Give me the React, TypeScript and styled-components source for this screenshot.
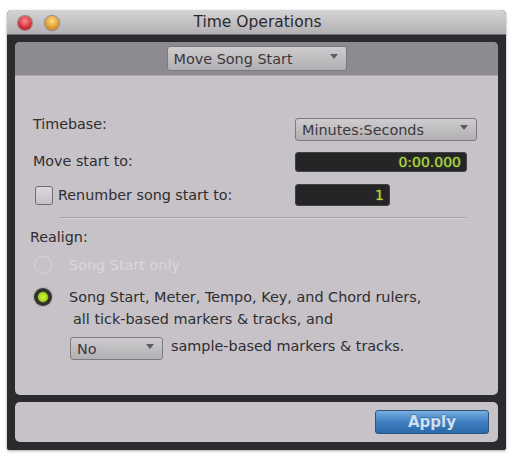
import React from "react";
import styled, { createGlobalStyle } from "styled-components";

const Global = createGlobalStyle`
  html, body { margin: 0; padding: 0; background: #ffffff; }
  body { font-family: "DejaVu Sans", "Liberation Sans", sans-serif; }
`;

const Page = styled.div`
  width: 510px;
  height: 454px;
  padding: 10px 0 0 7px;
  box-sizing: border-box;
`;

const Window = styled.div`
  width: 499px;
  height: 440px;
  background: #2b2a2e;
  border-radius: 5px 5px 2px 2px;
  display: flex;
  flex-direction: column;
  overflow: hidden;
  box-shadow: 0 1px 3px rgba(0,0,0,0.35);
`;

const TitleBar = styled.div`
  height: 25px;
  flex: none;
  position: relative;
  display: flex;
  align-items: center;
  justify-content: center;
  background: linear-gradient(#d6d3d7, #b3b0b4);
  border-bottom: 1px solid #6e6b70;
  box-sizing: border-box;
`;

const Lights = styled.div`
  position: absolute;
  left: 11px;
  top: 6px;
  display: flex;
  gap: 13px;
`;

const Light = styled.span<{ $c1: string; $c2: string }>`
  width: 14px;
  height: 14px;
  border-radius: 50%;
  background: radial-gradient(circle at 50% 35%, ${(p) => p.$c1} 0%, ${(p) => p.$c2} 70%);
  box-shadow: 0 0 0 1px rgba(90, 60, 40, 0.45);
`;

const Title = styled.div`
  font-size: 15.5px;
  color: #2a2a2a;
  margin-left: 2px;
`;

const Body = styled.div`
  flex: 1;
  display: flex;
  flex-direction: column;
  gap: 7px;
  padding: 7px 8px 8px 8px;
`;

const Panel = styled.div`
  height: 353px;
  border-radius: 5px;
  overflow: hidden;
  display: flex;
  flex-direction: column;
  background: #c6c2c7;
`;

const PanelHeader = styled.div`
  height: 34px;
  background: #8e8b90;
  display: flex;
  align-items: center;
  justify-content: center;
  border-bottom: 1px solid #a9a6ab;
  box-sizing: border-box;
`;

const Select = styled.div<{ $w: number; $h: number }>`
  width: ${(p) => p.$w}px;
  height: ${(p) => p.$h}px;
  box-sizing: border-box;
  border: 1px solid #7d7a7f;
  border-radius: 3px;
  background: linear-gradient(#cfccd0, #b2afb3);
  display: flex;
  align-items: center;
  justify-content: space-between;
  padding: 0 8px 0 6px;
  font-size: 14.4px;
  color: #3a383b;
  flex: none;
`;

const Arrow = styled.span`
  width: 0;
  height: 0;
  border-left: 4px solid transparent;
  border-right: 4px solid transparent;
  border-top: 5px solid #5f5c61;
  margin-top: -5px;
`;

const Content = styled.div`
  flex: 1;
  padding: 42px 30px 0 18px;
  display: flex;
  flex-direction: column;
`;

const FormRow = styled.div<{ $h: number; $mt: number }>`
  height: ${(p) => p.$h}px;
  margin-top: ${(p) => p.$mt}px;
  display: grid;
  grid-template-columns: 262px 1fr;
  align-items: center;
`;

const Label = styled.div<{ $dy?: number }>`
  font-size: 14.3px;
  color: #2f2d30;
  display: flex;
  align-items: center;
  gap: 5px;
  margin-top: ${(p) => p.$dy ?? 0}px;
`;

const Check = styled.span`
  width: 18px;
  height: 19px;
  box-sizing: border-box;
  border: 1px solid #6f6c71;
  border-radius: 3px;
  background: linear-gradient(#dcd9dd, #c4c1c5);
  margin-left: 2px;
`;

const Field = styled.div<{ $w: number; $h: number }>`
  width: ${(p) => p.$w}px;
  height: ${(p) => p.$h}px;
  box-sizing: border-box;
  background: #252426;
  border: 1px solid #414043;
  border-radius: 3px;
  color: #b2e043;
  font-size: 14px;
  display: flex;
  align-items: center;
  justify-content: flex-end;
  padding-right: 5px;
  text-shadow: 0 0 2px rgba(170, 230, 60, 0.5);
`;

const Separator = styled.div`
  height: 1px;
  margin: 11px 2px 0 27px;
  background: #a6a3a8;
  border-bottom: 1px solid #d3d0d4;
`;

const Section = styled.div`
  margin-top: 10px;
  margin-left: -3px;
  font-size: 14.3px;
  color: #2f2d30;
`;

const RadioRow = styled.div<{ $mt: number; $disabled?: boolean }>`
  margin-top: ${(p) => p.$mt}px;
  display: flex;
  align-items: center;
  gap: 17px;
  font-size: 14.4px;
  color: ${(p) => (p.$disabled ? "#dad7db" : "#2f2d30")};
  margin-left: 1px;
`;

const Radio = styled.span<{ $on?: boolean }>`
  width: 18px;
  height: 18px;
  border-radius: 50%;
  box-sizing: border-box;
  flex: none;
  ${(p) =>
    p.$on
      ? `background: radial-gradient(circle, #d2f53f 0%, #a4d61e 34%, #2c2e28 46%, #3d3d3b 100%);
         box-shadow: 0 0 2px rgba(0,0,0,0.4);`
      : `border: 1.5px solid #d9d6da; background: transparent;`}
`;

const TextLine = styled.div<{ $mt: number; $ml: number }>`
  margin-top: ${(p) => p.$mt}px;
  margin-left: ${(p) => p.$ml}px;
  font-size: 14.4px;
  color: #2f2d30;
  display: flex;
  align-items: center;
  gap: 8px;
`;

const SideText = styled.span`
  margin-top: -6px;
`;

const Footer = styled.div`
  height: 40px;
  border-radius: 5px;
  background: #c6c2c7;
  display: flex;
  align-items: center;
  justify-content: flex-end;
  padding-right: 9px;
`;

const ApplyButton = styled.button`
  width: 114px;
  height: 24px;
  border-radius: 3px;
  border: 1px solid #2d5378;
  background: linear-gradient(#78ade0 0%, #3d7ec0 50%, #2c69a9 100%);
  color: #cfe0f1;
  font-family: "DejaVu Sans", "Liberation Sans", sans-serif;
  font-size: 15px;
  font-weight: bold;
  padding: 0;
  text-shadow: 0 -1px 0 rgba(0,0,0,0.25);
`;

export default function App() {
  return (
    <>
      <Global />
      <Page>
        <Window>
          <TitleBar>
            <Lights>
              <Light $c1="#ff8a8f" $c2="#c8202c" />
              <Light $c1="#ffe08a" $c2="#d8901c" />
            </Lights>
            <Title>Time Operations</Title>
          </TitleBar>
          <Body>
            <Panel>
              <PanelHeader>
                <Select $w={180} $h={25}>
                  <span>Move Song Start</span>
                  <Arrow />
                </Select>
              </PanelHeader>
              <Content>
                <FormRow $h={23} $mt={0}>
                  <Label $dy={-11}>Timebase:</Label>
                  <Select $w={182} $h={23}>
                    <span>Minutes:Seconds</span>
                    <Arrow />
                  </Select>
                </FormRow>
                <FormRow $h={20} $mt={11}>
                  <Label $dy={-3}>Move start to:</Label>
                  <Field $w={172} $h={20}>0:00.000</Field>
                </FormRow>
                <FormRow $h={22} $mt={12}>
                  <Label>
                    <Check />
                    Renumber song start to:
                  </Label>
                  <Field $w={95} $h={22}>1</Field>
                </FormRow>
                <Separator />
                <Section>Realign:</Section>
                <RadioRow $mt={11} $disabled>
                  <Radio />
                  <span>Song Start only</span>
                </RadioRow>
                <RadioRow $mt={14}>
                  <Radio $on />
                  <span>Song Start, Meter, Tempo, Key, and Chord rulers,</span>
                </RadioRow>
                <TextLine $mt={5} $ml={40}>all tick-based markers &amp; tracks, and</TextLine>
                <TextLine $mt={10} $ml={37}>
                  <Select $w={93} $h={23}>
                    <span>No</span>
                    <Arrow />
                  </Select>
                  <SideText>sample-based markers &amp; tracks.</SideText>
                </TextLine>
              </Content>
            </Panel>
            <Footer>
              <ApplyButton>Apply</ApplyButton>
            </Footer>
          </Body>
        </Window>
      </Page>
    </>
  );
}
